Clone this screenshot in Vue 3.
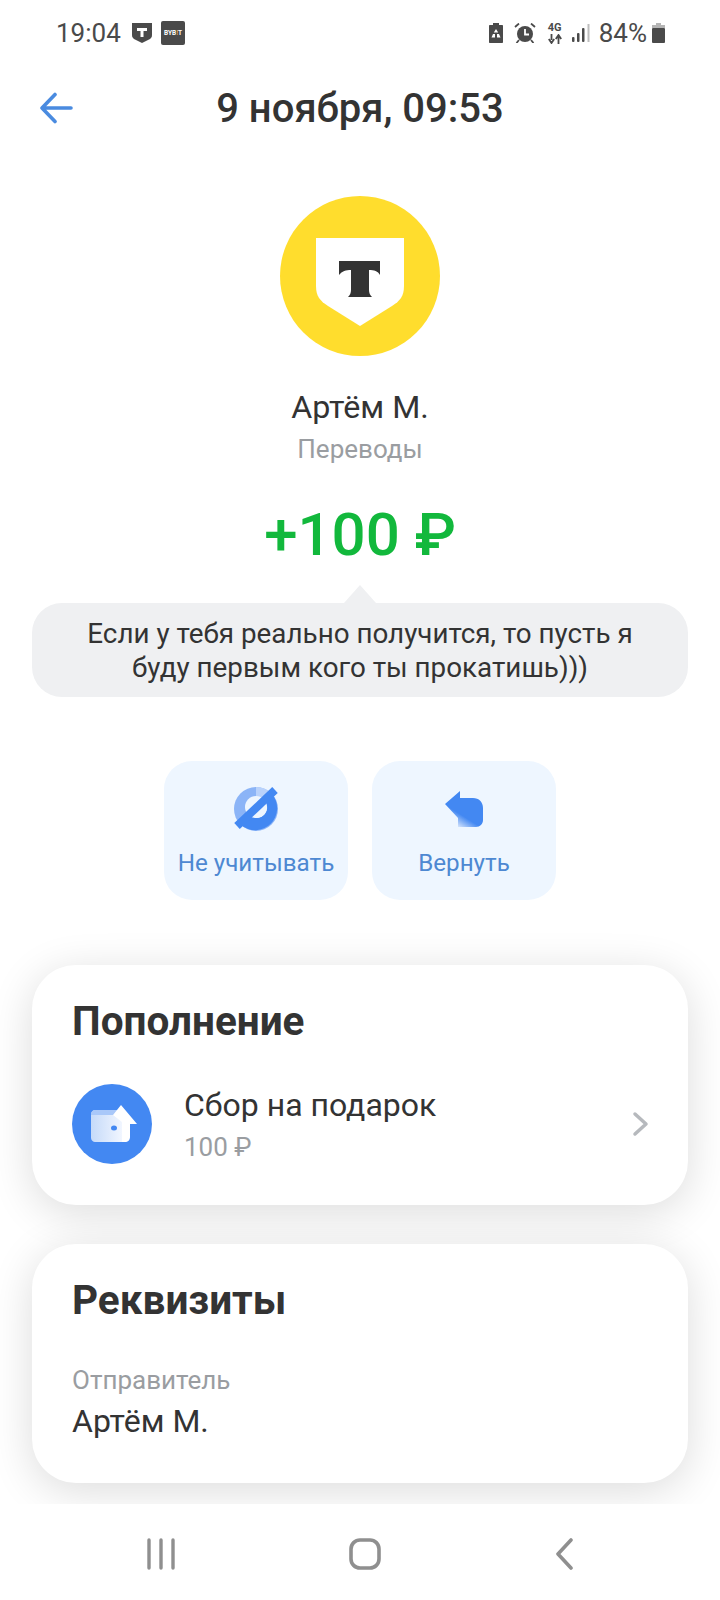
<template>
  <div class="screen">
    <div class="status">
      <div class="status-left">
        <span class="clock">19:04</span>
        <svg class="st-shield" width="20" height="20" viewBox="0 0 20 20">
          <path d="M0 0h20v12c0 2-1 3-2 4l-8 4-8-4c-1-1-2-2-2-4z" fill="#4a4a4a" />
          <path d="M5 5h10v3h-3.500v6h-3V8H5z" fill="#fff" />
        </svg>
        <div class="st-bybit">BYB<i>!</i>T</div>
      </div>
      <div class="status-right">
        <svg class="i-rec" width="14" height="20" viewBox="0 0 14 20">
          <path d="M4 0h6v2h3c.6 0 1 .4 1 1v16c0 .6-.4 1-1 1H1c-.6 0-1-.4-1-1V3c0-.6.4-1 1-1h3z" fill="#4a4a4a" />
          <path d="M7 6l2.200 3.400H4.800zM4 11l-1.500 3.500h3.500V11zM10 11l1.500 3.500H8V11z" fill="#fff" />
        </svg>
        <svg class="i-alarm" width="22" height="20" viewBox="0 0 22 20">
          <circle cx="11" cy="11" r="8" fill="#4a4a4a" />
          <path d="M11 6v5.500h4" fill="none" stroke="#fff" stroke-width="1.800" />
          <path d="M1 4l4-3.500M21 4l-4-3.500M5 17l-2.500 3M17 17l2.500 3" stroke="#4a4a4a" stroke-width="1.800" fill="none" />
        </svg>
        <div class="st-net">
          <span>4G</span>
          <svg width="14" height="10" viewBox="0 0 14 10">
            <path d="M3.500 0v6M.8 5l2.700 4 2.700-4M10.500 10V3M7.800 5l2.700-4 2.700 4" fill="none" stroke="#4a4a4a" stroke-width="1.800" />
          </svg>
        </div>
        <svg class="i-signal" width="18" height="18" viewBox="0 0 18 18">
          <rect x="0" y="13" width="2.500" height="5" rx="1" fill="#4a4a4a" />
          <rect x="5" y="9" width="2.500" height="9" rx="1" fill="#4a4a4a" />
          <rect x="10" y="4" width="2.500" height="14" rx="1" fill="#4a4a4a" />
          <rect x="15.500" y="0" width="2" height="18" fill="#bdbdbd" />
        </svg>
        <span class="st-pct">84%</span>
        <svg width="13" height="20" viewBox="0 0 13 20">
          <rect x="4" y="0" width="5" height="2" fill="#b5b5b5" />
          <rect x="0" y="2" width="13" height="3" fill="#b5b5b5" />
          <rect x="0" y="5" width="13" height="15" rx="1" fill="#4a4a4a" />
        </svg>
      </div>
    </div>

    <div class="topbar">
      <svg class="back" width="34" height="32" viewBox="0 0 34 32">
        <path d="M32 16H4M16 2.500L3 16l13 13.500" fill="none" stroke="#4a8be0" stroke-width="3.600" stroke-linecap="round" stroke-linejoin="round" />
      </svg>
      <h1>9 ноября, 09:53</h1>
    </div>

    <div class="hero">
      <div class="avatar">
        <svg width="88" height="88" viewBox="0 0 88 88">
          <path d="M0 0h88v48c0 10-4 15-12 20L44 88 12 68C4 63 0 58 0 48z" fill="#fff" />
          <path d="M23 23h41v14c-2-4-6-5-11-5v20c0 3 1 5 3 7H32c2-2 3-4 3-7V32c-5 0-9 1-12 5z" fill="#333" />
        </svg>
      </div>
      <div class="name">Артём М.</div>
      <div class="category">Переводы</div>
      <div class="amount">+100 ₽</div>
    </div>

    <div class="bubble">Если у тебя реально получится, то пусть я буду первым кого ты прокатишь)))</div>

    <div class="actions">
      <div v-for="a in actions" :key="a.label" class="action">
        <svg v-if="a.icon === 'skip'" width="44" height="44" viewBox="0 0 44 44">
          <circle cx="22" cy="22" r="22" fill="#8bb4f7" />
          <path d="M22 0a22 22 0 0 1 14 5L22 22z" fill="#b9d2fb" />
          <path d="M38 7A22 22 0 0 1 7 38z" fill="#4388f2" />
          <circle cx="22" cy="20" r="11" fill="#eef6ff" />
          <path d="M3 39L41 3" stroke="#4388f2" stroke-width="8" fill="none" />
          <path d="M20 31L33 19c1 6-4 13-13 12z" fill="#eef6ff" />
        </svg>
        <svg v-else width="44" height="44" viewBox="0 0 44 44">
          <defs>
            <linearGradient id="ret" x1="0.600" y1="0.550" x2="0.300" y2="1">
              <stop offset="0.350" stop-color="#4388f2" />
              <stop offset="1" stop-color="#e2ecfc" />
            </linearGradient>
          </defs>
          <path transform="translate(3 4)" d="M0 13L15 0v7h13c6 0 10 4 10 10v12c0 4-3 7-7 7H13v-9z" fill="url(#ret)" />
        </svg>
        <span>{{ a.label }}</span>
      </div>
    </div>

    <div class="card first">
      <h2>Пополнение</h2>
      <div class="row">
        <div class="round">
          <svg width="50" height="48" viewBox="0 0 50 48">
            <defs>
              <linearGradient id="wal" x1="0" y1="0" x2="1" y2="0">
                <stop offset="0" stop-color="#c5daf9" />
                <stop offset="1" stop-color="#f1f6ff" />
              </linearGradient>
            </defs>
            <path d="M4 14c0-2 2-4 4-4h27v32H8c-2 0-4-2-4-4z" fill="url(#wal)" />
            <path d="M4 15v-1c0-2 2-4 4-4h24v5z" fill="#a9c8f9" />
            <path d="M34 5l16 19h-7v13c0 3-2 5-5 5h-3V22l-9-7z" fill="#fff" />
            <ellipse cx="27" cy="28" rx="3" ry="2.500" fill="#4388f2" />
          </svg>
        </div>
        <div class="row-text">
          <div class="row-title">Сбор на подарок</div>
          <div class="row-sub">100 ₽</div>
        </div>
        <svg class="chev" width="18" height="26" viewBox="0 0 18 26">
          <path d="M3 3l11 10L3 23" fill="none" stroke="#b6b9bd" stroke-width="3.500" stroke-linecap="round" stroke-linejoin="round" />
        </svg>
      </div>
    </div>

    <div class="card second">
      <h2>Реквизиты</h2>
      <div class="field-label">Отправитель</div>
      <div class="field-value">Артём М.</div>
    </div>

    <div class="navbar">
      <svg width="30" height="32" viewBox="0 0 30 32">
        <path d="M3 2v28M15 2v28M27 2v28" stroke="#8f8f8f" stroke-width="3.400" stroke-linecap="round" fill="none" />
      </svg>
      <svg width="34" height="34" viewBox="0 0 34 34">
        <rect x="3" y="3" width="28" height="28" rx="9" fill="none" stroke="#8f8f8f" stroke-width="3.600" />
      </svg>
      <svg width="20" height="32" viewBox="0 0 20 32">
        <path d="M17 2L4 16l13 14" fill="none" stroke="#8f8f8f" stroke-width="3.600" stroke-linecap="round" stroke-linejoin="round" />
      </svg>
    </div>
  </div>
</template>

<script setup>
const actions = [
  { label: 'Не учитывать', icon: 'skip' },
  { label: 'Вернуть', icon: 'back' },
]
</script>

<style>
html,
body {
  margin: 0;
  background: #fff;
}
</style>

<style scoped>
.screen {
  width: 720px;
  height: 1600px;
  overflow: hidden;
  position: relative;
  background: #fff;
  font-family: Roboto, 'Noto Sans', sans-serif;
  color: #333;
}

.status {
  height: 66px;
  padding: 0 55px 0 56px;
  display: flex;
  align-items: center;
  justify-content: space-between;
  box-sizing: border-box;
  color: #4a4a4a;
}

.status-left,
.status-right {
  display: flex;
  align-items: center;
}

.clock {
  font-size: 26px;
  width: 76px;
}

.st-shield {
  margin-right: 9px;
}

.st-bybit {
  width: 24px;
  height: 24px;
  background: #4a4a4a;
  border-radius: 2px;
  color: #fff;
  font-size: 6.500px;
  font-weight: 700;
  line-height: 24px;
  text-align: center;
}

.st-bybit i {
  font-style: normal;
  color: #e8a93c;
}

.i-rec {
  margin-right: 11px;
}

.i-alarm {
  margin-right: 12px;
}

.i-signal {
  margin: 0 9px 0 10px;
}

.st-net {
  display: flex;
  flex-direction: column;
  align-items: center;
  font-size: 11px;
  font-weight: 700;
  line-height: 12px;
}

.st-pct {
  font-size: 26px;
  margin-right: 5px;
}

.topbar {
  height: 84px;
  position: relative;
  display: flex;
  align-items: center;
  justify-content: center;
}

.back {
  position: absolute;
  left: 39px;
  top: 26px;
}

h1 {
  margin: 0;
  font-size: 40px;
  font-weight: 500;
}

.hero {
  display: flex;
  flex-direction: column;
  align-items: center;
}

.avatar {
  margin-top: 46px;
  width: 160px;
  height: 160px;
  padding-top: 12px;
  box-sizing: border-box;
  border-radius: 50%;
  background: #ffdd2d;
  display: flex;
  align-items: center;
  justify-content: center;
}

.name {
  margin-top: 30px;
  font-size: 32.200px;
  line-height: 42px;
}

.category {
  margin-top: 5px;
  font-size: 26px;
  line-height: 32px;
  color: #9a9da1;
}

.amount {
  margin-top: 34px;
  font-size: 60px;
  font-weight: 500;
  line-height: 72px;
  color: #12b83c;
}

.bubble {
  position: relative;
  margin: 32px 32px 0;
  height: 94px;
  box-sizing: border-box;
  padding: 14px 50px;
  border-radius: 30px;
  background: #eff0f2;
  font-size: 27.800px;
  line-height: 33.500px;
  text-align: center;
}

.bubble::before {
  content: '';
  position: absolute;
  left: 50%;
  top: -18px;
  margin-left: -16px;
  border-left: 16px solid transparent;
  border-right: 16px solid transparent;
  border-bottom: 18px solid #eff0f2;
}

.actions {
  margin-top: 64px;
  display: flex;
  justify-content: center;
  gap: 24px;
}

.action {
  width: 184px;
  height: 139px;
  border-radius: 28px;
  background: #eef6ff;
  display: flex;
  flex-direction: column;
  align-items: center;
  padding-top: 26px;
  box-sizing: border-box;
  font-size: 24.200px;
  color: #4d88d2;
}

.action span {
  margin-top: 16px;
  line-height: 32px;
}

.card {
  margin: 65px 32px 0;
  box-sizing: border-box;
  padding: 34px 40px;
  border-radius: 44px;
  background: #fff;
  box-shadow: 0 8px 44px rgba(0, 0, 0, 0.14);
}

.card.first {
  height: 240px;
}

.card.second {
  margin-top: 39px;
  height: 239px;
}

h2 {
  margin: 0;
  font-size: 40.500px;
  line-height: 44px;
  font-weight: 700;
}

.row {
  margin-top: 41px;
  display: flex;
  align-items: center;
}

.round {
  width: 80px;
  height: 80px;
  border-radius: 50%;
  background: #4388f2;
  display: flex;
  align-items: center;
  justify-content: center;
}

.row-text {
  flex: 1;
  margin-left: 32px;
}

.row-title {
  font-size: 32px;
  line-height: 40px;
}

.row-sub {
  margin-top: 5px;
  font-size: 26px;
  line-height: 34px;
  color: #9a9da1;
}

.chev {
  margin-right: -2px;
}

.field-label {
  margin-top: 42px;
  font-size: 26px;
  line-height: 32px;
  color: #9a9da1;
}

.field-value {
  margin-top: 5px;
  font-size: 32px;
  line-height: 40px;
}

.navbar {
  position: absolute;
  left: 0;
  right: 0;
  bottom: 0;
  height: 96px;
  background: #fff;
  display: flex;
  align-items: center;
  justify-content: space-between;
  padding: 4px 146px 0 146px;
  box-sizing: border-box;
}
</style>
